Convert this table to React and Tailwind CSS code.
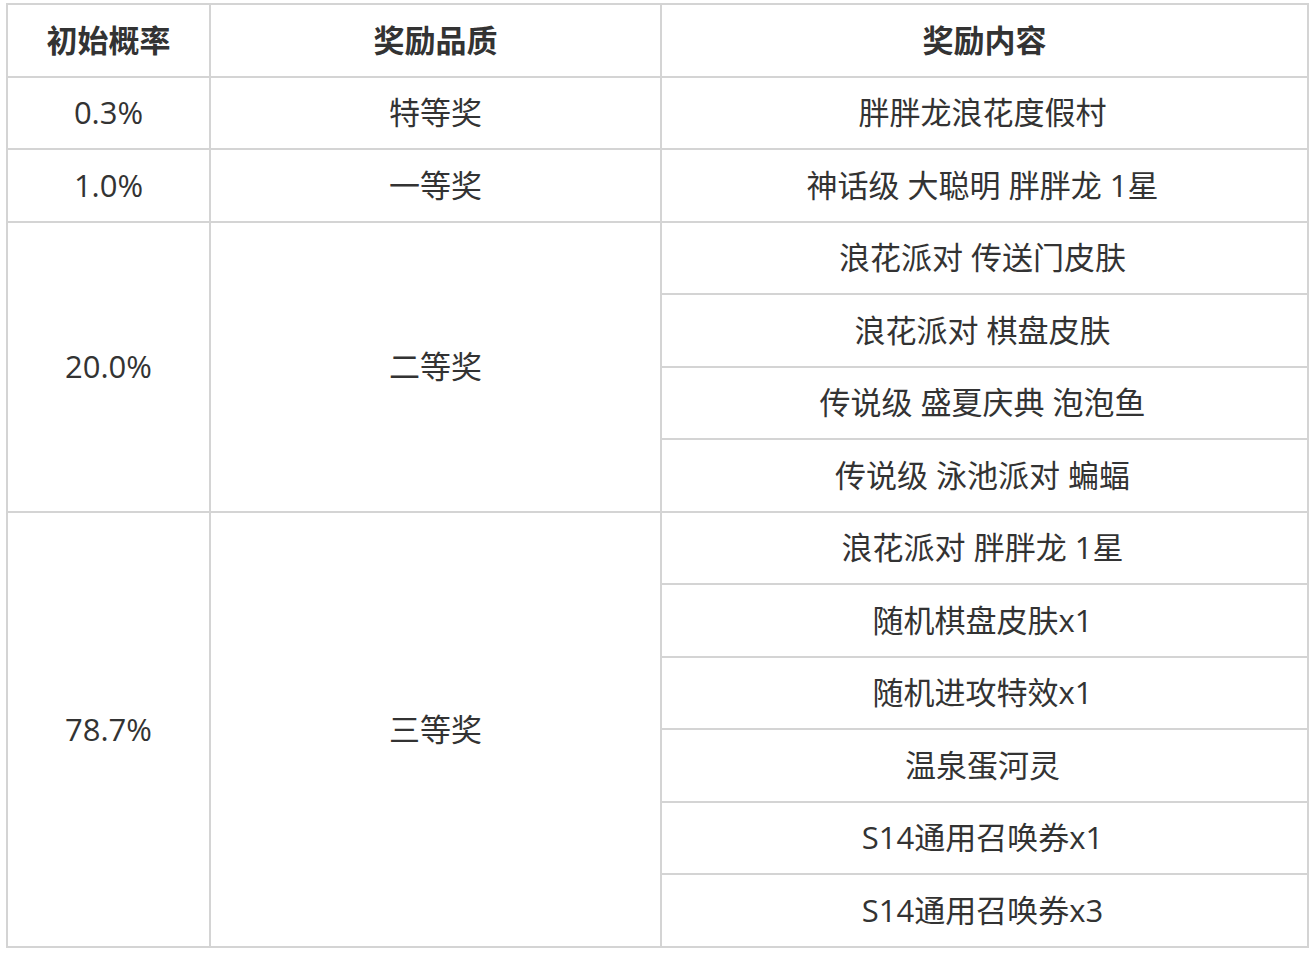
import React from "react";

const rows = [
  { p: "0.3%", q: "特等奖", items: ["胖胖龙浪花度假村"] },
  { p: "1.0%", q: "一等奖", items: ["神话级 大聪明 胖胖龙 1星"] },
  { p: "20.0%", q: "二等奖", items: ["浪花派对 传送门皮肤", "浪花派对 棋盘皮肤", "传说级 盛夏庆典 泡泡鱼", "传说级 泳池派对 蝙蝠"] },
  { p: "78.7%", q: "三等奖", items: ["浪花派对 胖胖龙 1星", "随机棋盘皮肤x1", "随机进攻特效x1", "温泉蛋河灵", "S14通用召唤券x1", "S14通用召唤券x3"] },
];

export default function App() {
  const cell = "border-2 border-[#d4d4d4] text-center align-middle h-[72.5px] p-0";
  return (
    <div className="bg-white w-[1311px] h-[955px] pt-[3px] pl-[6px] text-[#333333] font-['Open_Sans','Noto_Sans_CJK_SC',sans-serif] text-[31px] leading-none">
      <table className="border-collapse w-[1301px] table-fixed">
        <colgroup>
          <col className="w-[203px]" />
          <col className="w-[451px]" />
          <col className="w-[647px]" />
        </colgroup>
        <thead>
          <tr>
            <th className={cell + " font-bold"}>初始概率</th>
            <th className={cell + " font-bold"}>奖励品质</th>
            <th className={cell + " font-bold"}>奖励内容</th>
          </tr>
        </thead>
        <tbody>
          {rows.map((r) =>
            r.items.map((it, i) => (
              <tr key={r.p + i}>
                {i === 0 && (
                  <>
                    <td className={cell} rowSpan={r.items.length}>{r.p}</td>
                    <td className={cell} rowSpan={r.items.length}>{r.q}</td>
                  </>
                )}
                <td className={cell + " pr-[4px]"}>{it}</td>
              </tr>
            ))
          )}
        </tbody>
      </table>
    </div>
  );
}
